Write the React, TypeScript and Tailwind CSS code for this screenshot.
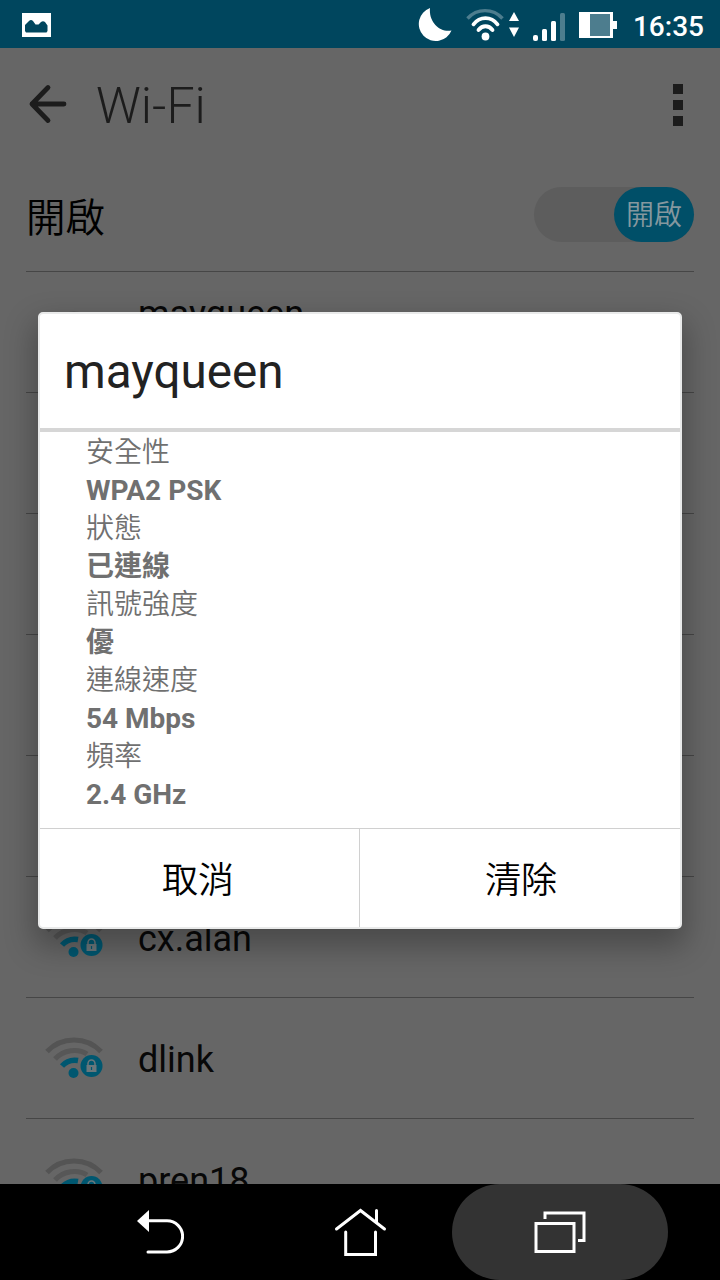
import React from "react";

const networks = ["mayqueen", "", "", "", "", "cx.alan", "dlink", "pren18"];

const details = [
  { label: "安全性", value: "WPA2 PSK" },
  { label: "狀態", value: "已連線" },
  { label: "訊號強度", value: "優" },
  { label: "連線速度", value: "54 Mbps" },
  { label: "頻率", value: "2.4 GHz" },
];

function SecureWifiIcon() {
  return (
    <svg width="60" height="46" viewBox="0 0 60 46" fill="none" className="shrink-0">
      <path d="M3 16.5C17.5 1 42.500 1 57 16.5" stroke="#545454" strokeWidth="5" />
      <path d="M11 24C19.500 14.500 34 13 43 19" stroke="#575757" strokeWidth="5" />
      <path d="M18 31C22 26.500 28 24.500 34 25.500" stroke="#005770" strokeWidth="5.500" />
      <circle cx="29.500" cy="38" r="5" fill="#005770" />
      <circle cx="47.500" cy="31" r="11" fill="#005770" />
      <path d="M44 30V28.500a3.500 3.500 0 0 1 7 0V30" stroke="#6b777b" strokeWidth="1.500" />
      <rect x="42.500" y="30" width="10" height="7" fill="#6b777b" />
      <path d="M47.500 32v3" stroke="#005770" strokeWidth="1.200" />
    </svg>
  );
}

function StatusBar() {
  return (
    <header className="flex h-12 shrink-0 items-center justify-between bg-[#00465e] pr-4 pl-[22px]">
      <svg width="29" height="24" viewBox="0 0 29 24" className="mt-0.5">
        <path fill="#fff" d="M0 0h29v24H0z" />
        <path fill="#00465e" d="M3 18v-6l4-4q2-2 4 0l2.500 3.500h3L19 9q2-1.500 4 0l2.500 3.500V18l-1 1.500H4z" />
      </svg>
      <div className="flex items-center">
        <svg width="204" height="48" viewBox="0 0 204 48" fill="none">
          <path fill="#fff" d="M14 8A17 17 0 1 0 35.500 30.500C24 33 12.500 22 14 8z" />
          <path d="M51.500 18.500C61 8 77 8 86.500 18.500" stroke="#4d7d8e" strokeWidth="3.400" />
          <g stroke="#fff" strokeWidth="3.800" strokeLinecap="round">
            <path d="M57.500 24.300C64 16 75 16 81.500 24.300" />
            <path d="M62.500 30C66.500 25 72.500 25 76.500 30" />
          </g>
          <circle cx="69.500" cy="36.500" r="3.900" fill="#fff" />
          <path fill="#fff" d="M98 12l5 9H93zM98 37l5-9.500H93z" />
          <g fill="#fff">
            <rect x="117" y="35" width="5" height="6" rx="2" />
            <rect x="126" y="29" width="5" height="12" rx="1.500" />
            <rect x="135" y="21" width="5" height="20" rx="1.500" />
            <rect x="163" y="12" width="34" height="26" />
            <rect x="197" y="21" width="4" height="8" />
          </g>
          <rect x="144" y="13" width="5" height="28" rx="1.500" fill="#4d7d8e" />
          <rect x="174" y="14" width="20" height="22" fill="#4d7d8e" />
        </svg>
        <time className="ml-[13px] pt-1.5 font-[Roboto,sans-serif] text-[28px] leading-8 font-medium text-white">16:35</time>
      </div>
    </header>
  );
}

function NavigationBar() {
  return (
    <nav className="flex h-24 shrink-0 items-stretch justify-between bg-black px-[52px]">
      <button className="flex w-[216px] items-center justify-center" aria-label="Back">
        <svg width="48" height="48" viewBox="0 0 48 48" fill="none">
          <path fill="#fff" d="M1 13L13 2v22z" />
          <path d="M12 12.800h19a15.600 15.600 0 0 1 0 31.200H12" stroke="#fff" strokeWidth="3" strokeLinecap="round" />
        </svg>
      </button>
      <button className="flex w-[184px] items-center justify-center" aria-label="Home">
        <svg width="54" height="50" viewBox="0 0 54 50" fill="none" stroke="#fff" strokeWidth="3" strokeLinecap="round">
          <path d="M3.500 22L27.500 3.500L51.500 22" />
          <path d="M43.500 3.500V15M12.700 25V47.500H42.500V25" />
        </svg>
      </button>
      <button className="flex w-[216px] items-center justify-center rounded-full bg-[#333333]" aria-label="Recent apps">
        <svg width="52" height="42" viewBox="0 0 52 42" fill="none" stroke="#fff" strokeWidth="3">
          <path d="M2 12.500h38v28H2zM11 8V2H50V29.500H44" />
        </svg>
      </button>
    </nav>
  );
}

function NetworkDialog() {
  return (
    <section
      role="dialog"
      className="absolute top-[312px] left-[38px] flex h-[617px] w-[644px] flex-col rounded-[5px] border-2 border-[#e9eaea] bg-white shadow-[0_14px_30px_4px_rgba(0,0,0,0.28)]"
    >
      <h2 className="flex h-[118px] shrink-0 items-center border-b-4 border-[#d6d6d6] pt-1 pl-6 font-[Roboto,sans-serif] text-[47.6px] font-normal text-[#222222]">
        mayqueen
      </h2>
      <dl className="h-[397px] shrink-0 border-b border-[#d0d0d0] pt-0.5 pl-[46px] text-[28px] text-[#707070]">
        {details.map((d) => (
          <React.Fragment key={d.label}>
            <dt className="h-[38px] font-[Roboto,'Noto_Sans_CJK_TC_DemiLight','Noto_Sans_CJK_TC',sans-serif] leading-[38px] font-normal">{d.label}</dt>
            <dd className="h-[38px] font-[Roboto,'Noto_Sans_CJK_TC',sans-serif] leading-[38px] font-bold">{d.value}</dd>
          </React.Fragment>
        ))}
      </dl>
      <div className="flex grow font-['Noto_Sans_CJK_TC_DemiLight','Noto_Sans_CJK_TC',sans-serif] text-[36px] text-black">
        <button className="w-[320px] border-r border-[#d0d0d0] pr-[3px] pb-0.5">取消</button>
        <button className="grow pb-0.5 pl-0.5">清除</button>
      </div>
    </section>
  );
}

export default function App() {
  return (
    <div className="relative flex h-[1280px] w-[720px] flex-col overflow-hidden bg-[#666666]">
      <StatusBar />
      <main className="flex min-h-0 grow flex-col overflow-hidden">
        <div className="flex h-[112px] shrink-0 items-center pr-[37px] pl-7">
          <svg width="40" height="40" viewBox="0 0 40 40" fill="none" stroke="#1c1c1c" strokeWidth="4.800" strokeLinecap="round" strokeLinejoin="round">
            <path d="M36 20H4M20 3.500L4 20L20 36.500" />
          </svg>
          <h1 className="ml-7 grow pt-1 font-[Roboto,sans-serif] text-[50px] leading-none font-light text-[#1c1c1c]">Wi-Fi</h1>
          <svg width="10" height="42" viewBox="0 0 10 42" fill="#1c1c1c" className="mt-0.5">
            <path d="M0 0h10v10H0zM0 16h10v10H0zM0 32h10v10H0z" />
          </svg>
        </div>
        <div className="mx-[26px] flex h-[112px] shrink-0 items-center justify-between border-b border-[#464646] pb-0.5 font-['Noto_Sans_CJK_TC_DemiLight','Noto_Sans_CJK_TC',sans-serif]">
          <span className="text-[39.5px] leading-none text-black">開啟</span>
          <div className="flex h-[55px] w-40 justify-end rounded-full bg-[#5d5d5d]">
            <span className="flex w-20 items-center justify-center rounded-full bg-[#004f68] pb-1 text-[28px] leading-none text-[#85989f]">開啟</span>
          </div>
        </div>
        <ul className="mx-[26px]">
          {networks.map((name, i) => (
            <li key={i} className="flex h-[121px] items-center border-b border-[#464646] pl-[18px]">
              <SecureWifiIcon />
              <span className={`ml-[34px] pt-1 font-[Roboto,sans-serif] text-[36px] leading-none text-[#080808] ${i === 0 ? "pb-10" : ""}`}>{name}</span>
            </li>
          ))}
        </ul>
      </main>
      <NavigationBar />
      <NetworkDialog />
    </div>
  );
}
